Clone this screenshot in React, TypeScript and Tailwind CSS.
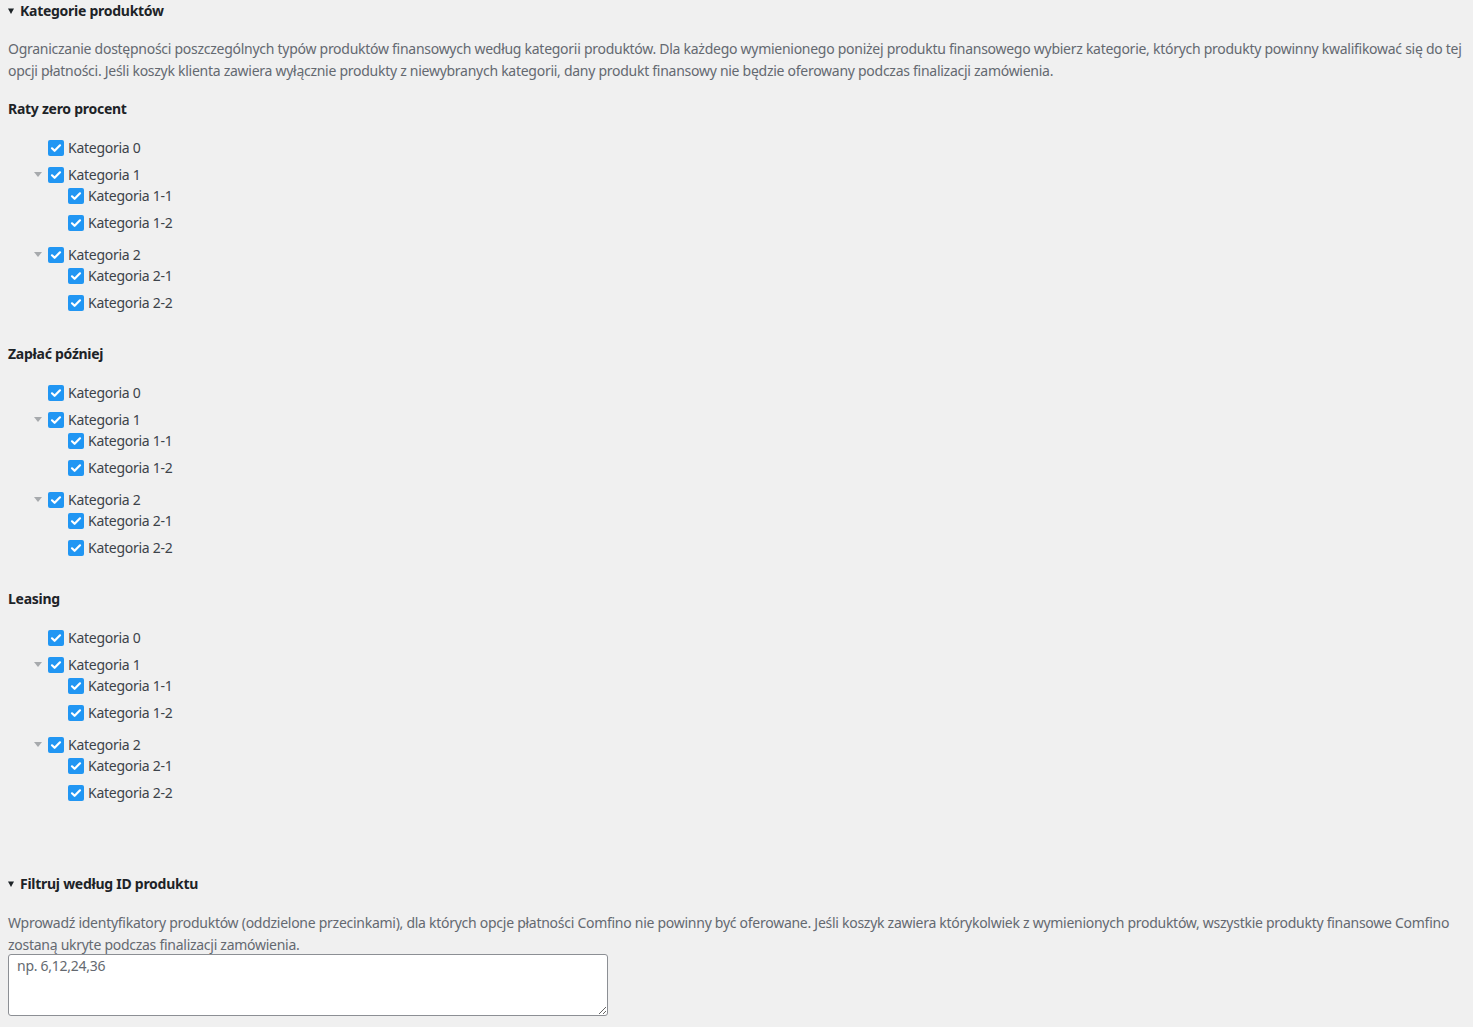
import type { ReactNode } from "react";

type Node = { label: string; children?: Node[] };

const categories: Node[] = [
  { label: "Kategoria 0" },
  {
    label: "Kategoria 1",
    children: [{ label: "Kategoria 1-1" }, { label: "Kategoria 1-2" }],
  },
  {
    label: "Kategoria 2",
    children: [{ label: "Kategoria 2-1" }, { label: "Kategoria 2-2" }],
  },
];

const products = ["Raty zero procent", "Zapłać później", "Leasing"];

function CheckBox() {
  return (
    <span className="flex h-4 w-4 flex-none items-center justify-center rounded-[2px] bg-[#2196f3]">
      <svg viewBox="0 0 16 16" className="h-4 w-4" fill="none">
        <path
          d="M4 8.3l2.6 2.5L12 5.3"
          stroke="#fff"
          strokeWidth="2.2"
          strokeLinecap="round"
          strokeLinejoin="round"
        />
      </svg>
    </span>
  );
}

function TreeRow({ node, toggle }: { node: Node; toggle?: boolean }) {
  return (
    <div className="flex h-[21px] items-center">
      <span className="flex w-5 flex-none items-center justify-center">
        {toggle && (
          <svg viewBox="0 0 8 5" className="h-[5px] w-2">
            <path d="M0 0h8L4 5z" fill="#a7aaad" />
          </svg>
        )}
      </span>
      <CheckBox />
      <span className="ml-1 text-[#3c434a]">{node.label}</span>
    </div>
  );
}

function Tree({ nodes }: { nodes: Node[] }) {
  return (
    <ul className="ml-5">
      {nodes.map((node) =>
        node.children ? (
          <li key={node.label} className="mb-[11px]">
            <TreeRow node={node} toggle />
            <ul className="ml-5">
              {node.children.map((child) => (
                <li key={child.label} className="mb-[6px]">
                  <TreeRow node={child} />
                </li>
              ))}
            </ul>
          </li>
        ) : (
          <li key={node.label} className="mb-[6px]">
            <TreeRow node={node} />
          </li>
        ),
      )}
    </ul>
  );
}

function SectionTitle({ children }: { children: ReactNode }) {
  return (
    <h2 className="flex items-center gap-[6px] text-[14px] font-bold text-[#1d2327]">
      <svg viewBox="0 0 6 6" className="h-[6px] w-[6px]">
        <path d="M0 0.5h6L3 6z" fill="#1d2327" />
      </svg>
      {children}
    </h2>
  );
}

export default function App() {
  return (
    <div
      className="min-h-[1027px] bg-[#f0f0f0] px-2 text-[14px] leading-[22px] tracking-[-0.27px]"
      style={{ fontFamily: '"Noto Sans", "Open Sans", sans-serif' }}
    >
      <section>
        <SectionTitle>Kategorie produktów</SectionTitle>
        <p className="mt-[16px] text-[#646970]">
          Ograniczanie dostępności poszczególnych typów produktów finansowych według kategorii
          produktów. Dla każdego wymienionego poniżej produktu finansowego wybierz kategorie, których
          produkty powinny kwalifikować się do tej opcji płatności. Jeśli koszyk klienta zawiera
          wyłącznie produkty z niewybranych kategorii, dany produkt finansowy nie będzie oferowany
          podczas finalizacji zamówienia.
        </p>
        {products.map((name) => (
          <div key={name} className="mt-[16px] mb-[30px]">
            <h3 className="font-bold text-[#1d2327]">{name}</h3>
            <div className="mt-[17px]">
              <Tree nodes={categories} />
            </div>
          </div>
        ))}
      </section>

      <section className="mt-[70px]">
        <SectionTitle>Filtruj według ID produktu</SectionTitle>
        <p className="mt-[17px] text-[#646970]">
          Wprowadź identyfikatory produktów (oddzielone przecinkami), dla których opcje płatności
          Comfino nie powinny być oferowane. Jeśli koszyk zawiera którykolwiek z wymienionych
          produktów, wszystkie produkty finansowe Comfino zostaną ukryte podczas finalizacji
          zamówienia.
        </p>
        <textarea
          rows={3}
          placeholder="np. 6,12,24,36"
          className="-mt-[2px] block h-[62px] w-[600px] rounded-[3px] border border-[#8c8f94] bg-white px-2 py-0 text-[14px] leading-[22px] text-[#2c3338] placeholder:text-[#646970]"
        />
      </section>
    </div>
  );
}
